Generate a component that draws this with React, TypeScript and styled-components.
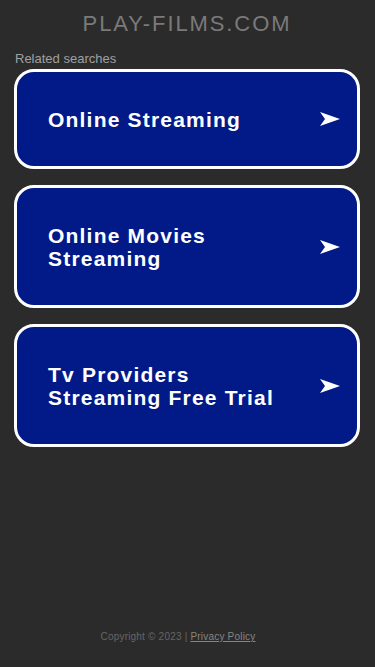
import styled, { createGlobalStyle } from 'styled-components';

const GlobalStyle = createGlobalStyle`
  html, body {
    margin: 0;
    padding: 0;
    background: #2b2b2b;
  }
  body {
    font-family: 'Liberation Sans', Arial, sans-serif;
  }
`;

const Page = styled.div`
  display: flex;
  flex-direction: column;
  min-height: 100vh;
  box-sizing: border-box;
  padding: 0 15px 24px 14px;
`;

const Title = styled.h1`
  margin: 12px 0 0;
  text-align: center;
  font-size: 22px;
  font-weight: normal;
  line-height: 24px;
  letter-spacing: 1.9px;
  color: #7a7a7a;
`;

const Label = styled.div`
  margin-top: 15px;
  padding-left: 1px;
  font-size: 13px;
  line-height: 16px;
  color: #a0a0a0;
`;

const List = styled.div`
  display: flex;
  flex-direction: column;
  gap: 16px;
  margin-top: 2px;
`;

const Card = styled.a`
  display: flex;
  align-items: center;
  justify-content: space-between;
  gap: 16px;
  padding: 35.5px 17px 35.5px 31px;
  border: 3px solid #ffffff;
  border-radius: 20px;
  background: #011a87;
  text-decoration: none;
  cursor: pointer;
`;

const CardText = styled.span`
  font-size: 21px;
  font-weight: bold;
  line-height: 23px;
  letter-spacing: 1.2px;
  color: #ffffff;
`;

const Footer = styled.div`
  margin-top: auto;
  padding-right: 18px;
  text-align: center;
  font-size: 10px;
  line-height: 12px;
  letter-spacing: 0.2px;
  color: #666666;
`;

const FooterLink = styled.a`
  color: #858585;
  text-decoration: underline;
`;

const Arrow = () => (
  <svg width="20" height="14" viewBox="0 0 20 14">
    <path d="M0 0 L20 7 L0 14 L5 7 Z" fill="#ffffff" />
  </svg>
);

const searches = [
  ['Online Streaming'],
  ['Online Movies', 'Streaming'],
  ['Tv Providers', 'Streaming Free Trial'],
];

export default function App() {
  return (
    <>
      <GlobalStyle />
      <Page>
        <Title>PLAY-FILMS.COM</Title>
        <Label>Related searches</Label>
        <List>
          {searches.map((lines) => (
            <Card key={lines.join(' ')}>
              <CardText>
                {lines.map((line, i) => (
                  <span key={line}>
                    {i > 0 && <br />}
                    {line}
                  </span>
                ))}
              </CardText>
              <Arrow />
            </Card>
          ))}
        </List>
        <Footer>
          Copyright © 2023 | <FooterLink>Privacy Policy</FooterLink>
        </Footer>
      </Page>
    </>
  );
}
